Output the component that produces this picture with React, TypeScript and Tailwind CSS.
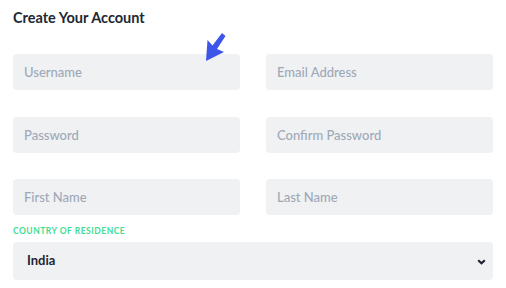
import React from 'react';

// Simple sign-up form: six fields in a two-column grid, then a country select
const fields = ['Username', 'Email Address', 'Password', 'Confirm Password', 'First Name', 'Last Name'];

function App() {
  return (
    <div className="relative w-[506px] h-[288px] bg-white px-[13px] pt-[8px] font-['Lato',sans-serif]">
      <h1 className="text-[14.5px] leading-[20px] font-bold text-[#222831]">Create Your Account</h1>

      <div className="mt-[26px] grid grid-cols-2 gap-x-[26px] gap-y-[26.5px]">
        {fields.map(f => (
          <input
            key={f}
            type="text"
            placeholder={f}
            className="h-9 w-full rounded-[4px] bg-[#f0f1f3] px-[11px] text-[13px] font-medium text-[#222831] placeholder:text-[#9ea9b8] outline-none"
          />
        ))}
      </div>

      <label className="mt-[10px] mb-[5px] block text-[8.5px] leading-[12px] font-bold uppercase tracking-[0.5px] text-[#3fdd95]">
        Country of Residence
      </label>
      <div className="relative">
        <select
          defaultValue="India"
          className="h-[38px] w-full appearance-none rounded-[4px] bg-[#f0f1f3] pl-[14px] text-[13px] font-bold text-[#1f2430] outline-none"
        >
          <option>India</option>
          <option>United States</option>
          <option>United Kingdom</option>
        </select>
        <svg className="pointer-events-none absolute right-[7px] top-[17px]" width="9" height="6" viewBox="0 0 9 6">
          <path d="M1.2 1.2 L4.5 4.3 L7.8 1.2" fill="none" stroke="#1f2430" strokeWidth="2.2" />
        </svg>
      </div>

      {/* annotation arrow pointing at the username field */}
      <svg className="pointer-events-none absolute left-[200px] top-[30px]" width="30" height="36" viewBox="200 30 30 36">
        <polygon points="206,61 207.5,40 212.5,45.5 222,33 225.5,36 217,49 224,52" fill="#3d55e8" />
      </svg>
    </div>
  );
}

export default App;
